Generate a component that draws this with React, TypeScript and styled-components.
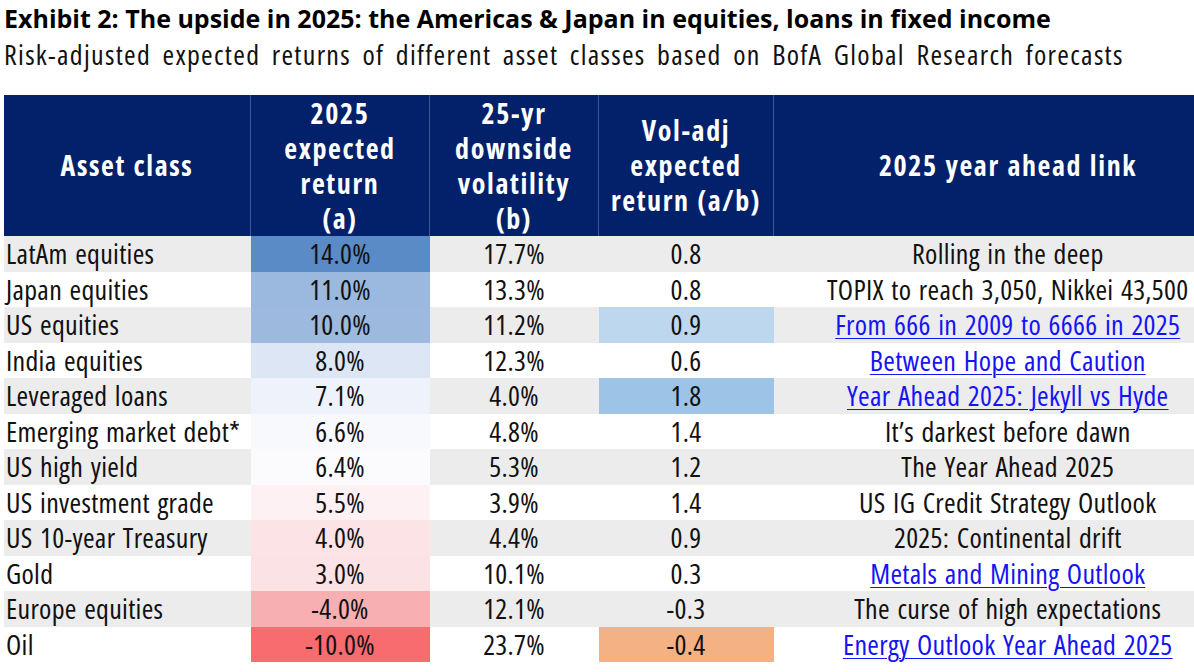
import styled, { createGlobalStyle } from 'styled-components';

const GlobalStyle = createGlobalStyle`
  html, body {
    margin: 0;
    padding: 0;
    background: #ffffff;
    overflow: hidden;
  }
  body {
    font-family: "Open Sans", "Liberation Sans", sans-serif;
    font-stretch: 75%;
    color: #111111;
  }
`

type Row = {
  asset: string
  ret: string
  retBg: string
  vol: string
  adj: string
  adjBg?: string
  link: string
  isLink?: boolean
}

const rows: Row[] = [
  { asset: 'LatAm equities', ret: '14.0%', retBg: '#5b8bc6', vol: '17.7%', adj: '0.8', link: 'Rolling in the deep' },
  { asset: 'Japan equities', ret: '11.0%', retBg: '#9bb9de', vol: '13.3%', adj: '0.8', link: 'TOPIX to reach 3,050, Nikkei 43,500' },
  { asset: 'US equities', ret: '10.0%', retBg: '#9db9de', vol: '11.2%', adj: '0.9', adjBg: '#bdd7ee', link: 'From 666 in 2009 to 6666 in 2025', isLink: true },
  { asset: 'India equities', ret: '8.0%', retBg: '#dce6f4', vol: '12.3%', adj: '0.6', link: 'Between Hope and Caution', isLink: true },
  { asset: 'Leveraged loans', ret: '7.1%', retBg: '#eef2fa', vol: '4.0%', adj: '1.8', adjBg: '#9dc3e6', link: 'Year Ahead 2025: Jekyll vs Hyde', isLink: true },
  { asset: 'Emerging market debt*', ret: '6.6%', retBg: '#f7f9fd', vol: '4.8%', adj: '1.4', link: 'It\u2019s darkest before dawn' },
  { asset: 'US high yield', ret: '6.4%', retBg: '#fbfbfe', vol: '5.3%', adj: '1.2', link: 'The Year Ahead 2025' },
  { asset: 'US investment grade', ret: '5.5%', retBg: '#fdf1f3', vol: '3.9%', adj: '1.4', link: 'US IG Credit Strategy Outlook' },
  { asset: 'US 10-year Treasury', ret: '4.0%', retBg: '#fbe3e6', vol: '4.4%', adj: '0.9', link: '2025: Continental drift' },
  { asset: 'Gold', ret: '3.0%', retBg: '#fbe2e5', vol: '10.1%', adj: '0.3', link: 'Metals and Mining Outlook', isLink: true },
  { asset: 'Europe equities', ret: '-4.0%', retBg: '#f8afb2', vol: '12.1%', adj: '-0.3', link: 'The curse of high expectations' },
  { asset: 'Oil', ret: '-10.0%', retBg: '#f86b6e', vol: '23.7%', adj: '-0.4', adjBg: '#f4b183', link: 'Energy Outlook Year Ahead 2025', isLink: true },
]

function App() {
  return (
    <Page>
      <GlobalStyle />
      <Title>Exhibit 2: The upside in 2025: the Americas &amp; Japan in equities, loans in fixed income</Title>
      <Subtitle>Risk-adjusted expected returns of different asset classes based on BofA Global Research forecasts</Subtitle>
      <Table>
        <thead>
          <tr>
            <Th $w={246}>Asset class</Th>
            <Th $w={178}>2025<br />expected<br />return<br />(a)</Th>
            <Th $w={168}>25-yr<br />downside<br />volatility<br />(b)</Th>
            <Th $w={174}>Vol-adj<br />expected<br />return (a/b)</Th>
            <Th $w={468}>2025 year ahead link</Th>
          </tr>
        </thead>
        <tbody>
          {rows.map((r, i) => (
            <Tr key={r.asset} $odd={i % 2 === 0}>
              <AssetCell>{r.asset}</AssetCell>
              <Td $bg={r.retBg}>{r.ret}</Td>
              <Td>{r.vol}</Td>
              <Td $bg={r.adjBg}>{r.adj}</Td>
              <Td>{r.isLink ? <Link href="#">{r.link}</Link> : r.link}</Td>
            </Tr>
          ))}
        </tbody>
      </Table>
    </Page>
  )
}

export default App;

const Page = styled.div`
  width: 1194px;
  height: 672px;
  overflow: hidden;
  padding: 2px 0 0 4px;
  box-sizing: border-box;
`

const Title = styled.h1`
  margin: 0;
  font-size: 25px;
  font-weight: 700;
  font-stretch: 100%;
  line-height: 32px;
  white-space: nowrap;
  color: #000;
`

const Subtitle = styled.p`
  margin: 3px 0 24px;
  font-size: 28px;
  font-weight: 400;
  letter-spacing: 1.3px;
  word-spacing: 5px;
  line-height: 34px;
  white-space: nowrap;
  color: #111;
`

const Table = styled.table`
  width: 1234px;
  border-collapse: collapse;
  table-layout: fixed;
`

const Th = styled.th<{ $w: number }>`
  width: ${p => p.$w}px;
  height: 141px;
  padding: 0;
  background: #03216a;
  color: #fff;
  font-size: 28px;
  font-weight: 700;
  letter-spacing: 1.6px;
  word-spacing: 1px;
  line-height: 35px;
  text-align: center;
  vertical-align: middle;
  border-left: 1px solid #3d5893;

  &:first-child {
    border-left: none;
  }
`

const Tr = styled.tr<{ $odd: boolean }>`
  height: 35.5px;
  background: ${p => (p.$odd ? '#ececec' : '#ffffff')};
`

const Td = styled.td<{ $bg?: string }>`
  padding: 0;
  font-size: 28px;
  letter-spacing: 0.3px;
  word-spacing: 2px;
  line-height: 35px;
  text-align: center;
  white-space: nowrap;
  background: ${p => p.$bg ?? 'transparent'};
`

const AssetCell = styled(Td)`
  text-align: left;
  padding-left: 2px;
`

const Link = styled.a`
  color: #1414f5;
  text-decoration: underline;
  text-decoration-thickness: 1px;
  text-underline-offset: 3px;
`
